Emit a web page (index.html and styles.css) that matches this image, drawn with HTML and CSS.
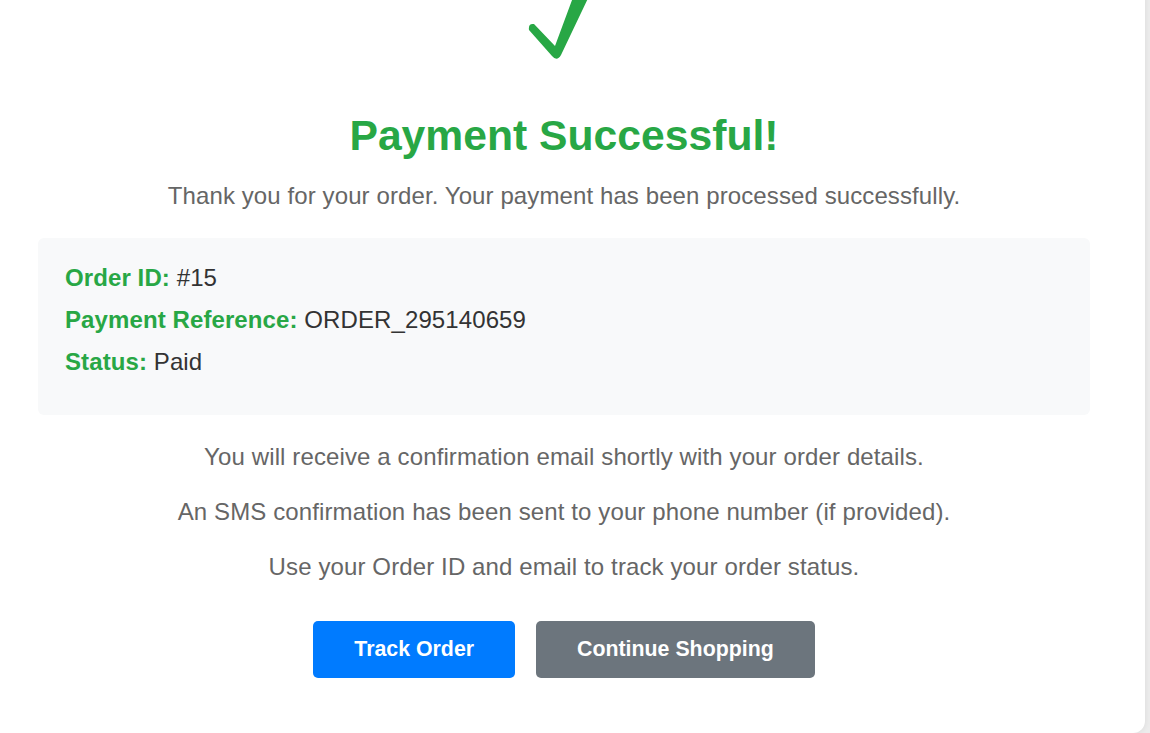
FILE: index.html
```html
<!DOCTYPE html>
<html lang="en">
<head>
<meta charset="utf-8">
<title>Payment Successful</title>
<link rel="stylesheet" href="styles.css">
</head>
<body>
<main class="card">
  <svg class="check" viewBox="524 -40 80 104" width="80" height="104" aria-hidden="true">
    <path d="M534 24 L555 46 L575 -8 L591 -8 L561 55 Q557 62 552 56 L529 30 Q528 23 534 24 Z" fill="#28a745"/>
  </svg>
  <h1 class="title">Payment Successful!</h1>
  <p class="subtitle">Thank you for your order. Your payment has been processed successfully.</p>
  <section class="details">
    <div class="row"><span class="label">Order ID:</span> #15</div>
    <div class="row"><span class="label">Payment Reference:</span> ORDER_295140659</div>
    <div class="row"><span class="label">Status:</span> Paid</div>
  </section>
  <p class="note">You will receive a confirmation email shortly with your order details.</p>
  <p class="note">An SMS confirmation has been sent to your phone number (if provided).</p>
  <p class="note">Use your Order ID and email to track your order status.</p>
  <div class="actions">
    <a class="btn btn-primary" href="#">Track Order</a>
    <a class="btn btn-secondary" href="#">Continue Shopping</a>
  </div>
</main>
</body>
</html>
```
FILE: styles.css
```css
html, body {
  margin: 0;
  padding: 0;
}
body {
  background: #ececec;
  font-family: "Liberation Sans", Arial, sans-serif;
  overflow: hidden;
}
.card {
  display: block;
  width: 1052px;
  margin: -40px 0 0 0;
  padding: 0 55px 55px 38px;
  background: #ffffff;
  border-radius: 0 0 12px 0;
  box-shadow: 0 0 6px rgba(0, 0, 0, 0.08);
  text-align: center;
}
.check {
  display: block;
  margin: 0 auto 47px auto;
}
.title {
  margin: 0;
  font-size: 42.67px;
  line-height: 48px;
  font-weight: bold;
  color: #28a745;
}
.subtitle {
  margin: 20px 0 0 0;
  font-size: 24px;
  line-height: 34px;
  letter-spacing: 0.1px;
  color: #666666;
}
.details {
  margin: 25px 0 25px 0;
  padding: 19px 27px 32px 27px;
  background: #f8f9fa;
  border-radius: 6px;
  text-align: left;
}
.row {
  font-size: 24px;
  line-height: 42px;
  letter-spacing: 0.1px;
  color: #333333;
}
.label {
  font-weight: bold;
  color: #28a745;
}
.note {
  margin: 0 0 21px 0;
  font-size: 24px;
  line-height: 34px;
  letter-spacing: 0.12px;
  color: #666666;
}
.actions {
  display: flex;
  justify-content: center;
  gap: 21px;
  margin-top: 37px;
}
.btn {
  display: inline-block;
  padding: 16px 41px 16px 41px;
  font-size: 21.33px;
  line-height: 25px;
  font-weight: bold;
  color: #ffffff;
  text-decoration: none;
  border-radius: 5px;
}
.btn-primary {
  background: #007bff;
}
.btn-secondary {
  background: #6c757d;
}
```
